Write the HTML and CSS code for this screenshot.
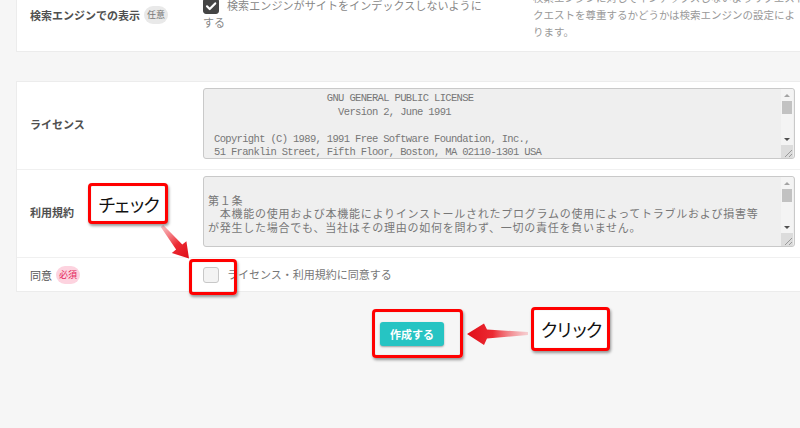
FILE: index.html
```html
<!DOCTYPE html>
<html lang="ja">

<head>
    <meta charset="UTF-8">
    <title>サイト作成</title>
    <link rel="stylesheet" href="styles.css">
</head>

<body>
    <div class="page">

        <!-- SEO row -->
        <div class="card card-top">
            <div class="row row-seo">
                <div class="label">検索エンジンでの表示<span class="badge">任意</span></div>
                <div class="seo-value">
                    <span class="check check-on"><svg width="16" height="16" viewBox="0 0 16 16"><path d="M4 8.3l2.7 2.7L12.2 5.4" fill="none" stroke="#fff" stroke-width="2.2" stroke-linecap="round" stroke-linejoin="round"/></svg></span>検索エンジンがサイトをインデックスしないように<br>する
                </div>
                <div class="help">検索エンジンに対してインデックスしないようリクエストしますが、このリ<br>クエストを尊重するかどうかは検索エンジンの設定によ<br>ります。</div>
            </div>
        </div>

        <!-- License / terms -->
        <div class="card card-main">
            <div class="row row-text">
                <div class="label">ライセンス</div>
                <div class="value">
                    <div class="textbox">
                        <div class="textbox-text mono">                    GNU GENERAL PUBLIC LICENSE
                      Version 2, June 1991

Copyright (C) 1989, 1991 Free Software Foundation, Inc.,
51 Franklin Street, Fifth Floor, Boston, MA 02110-1301 USA</div>
                        <div class="scrollbar">
                            <div class="sb-btn"><span class="arrow-up"></span></div>
                            <div class="sb-thumb"></div>
                            <div class="sb-track"></div>
                            <div class="sb-btn"><span class="arrow-down"></span></div>
                            <div class="sb-grip"><svg width="12" height="13" viewBox="0 0 12 13"><path d="M11 5L4 12M11 9L8 12" stroke="#9a9a9a" stroke-width="1"/></svg></div>
                        </div>
                    </div>
                </div>
            </div>
            <div class="row row-text">
                <div class="label">利用規約</div>
                <div class="value">
                    <div class="textbox">
                        <div class="textbox-text jp">
第１条
　本機能の使用および本機能によりインストールされたプログラムの使用によってトラブルおよび損害等
が発生した場合でも、当社はその理由の如何を問わず、一切の責任を負いません。</div>
                        <div class="scrollbar">
                            <div class="sb-btn"><span class="arrow-up"></span></div>
                            <div class="sb-thumb"></div>
                            <div class="sb-track"></div>
                            <div class="sb-btn"><span class="arrow-down"></span></div>
                            <div class="sb-grip"><svg width="12" height="13" viewBox="0 0 12 13"><path d="M11 5L4 12M11 9L8 12" stroke="#9a9a9a" stroke-width="1"/></svg></div>
                        </div>
                    </div>
                </div>
            </div>
            <div class="row row-agree">
                <div class="label label-light">同意<span class="badge badge-req">必須</span></div>
                <div class="agree">
                    <span class="check"></span>ライセンス・利用規約に同意する
                </div>
            </div>
        </div>

        <div class="actions">
            <button class="btn-submit">作成する</button>
        </div>

        <!-- annotations -->
        <svg class="arrows" width="800" height="428" viewBox="0 0 800 428">
            <defs>
                <linearGradient id="g1" gradientUnits="userSpaceOnUse" x1="160" y1="224" x2="188" y2="258">
                    <stop offset="0" stop-color="#f6a3a8" stop-opacity="0.6"/>
                    <stop offset="0.6" stop-color="#ec2a33"/>
                    <stop offset="1" stop-color="#e0101a"/>
                </linearGradient>
                <linearGradient id="g2" gradientUnits="userSpaceOnUse" x1="530" y1="0" x2="468" y2="0">
                    <stop offset="0" stop-color="#f6a3a8" stop-opacity="0.4"/>
                    <stop offset="0.6" stop-color="#ec2a33"/>
                    <stop offset="1" stop-color="#e0101a"/>
                </linearGradient>
            </defs>
            <polygon points="163.2,225.1 182.3,244.6 186.4,241.2 189,258.5 171.8,253 176.1,249.6 160.8,226.9" fill="url(#g1)"/>
            <polygon points="528,332 487,329.5 484,323.5 467,334 484,345 487,338.5 528,335" fill="url(#g2)"/>
        </svg>

        <div class="mark mark-check"><span>チェック</span></div>
        <div class="mark mark-box"></div>
        <div class="mark mark-btn"></div>
        <div class="mark mark-click"><span>クリック</span></div>
    </div>
</body>

</html>
```

FILE: styles.css
```css
body {
    margin: 0;
    background: #f6f6f6;
    font-family: "Noto Sans CJK JP", sans-serif;
    color: #555;
    overflow: hidden;
}

.page {
    position: relative;
    display: flow-root;
    height: 428px;
    padding-left: 16px;
}

.card {
    background: #fff;
    border: 1px solid #ececec;
    border-right: 0;
}

.card-top {
    margin-top: -24px;
}

.card-main {
    margin-top: 29px;
}

.row {
    display: grid;
    grid-template-columns: 186px 1fr;
    align-items: center;
    border-top: 1px solid #f0f0f0;
}

.row:first-child {
    border-top: 0;
}

.row-seo {
    grid-template-columns: 186px 330px 1fr;
    align-items: start;
    padding: 12px 0 11px;
}

.row-seo .label {
    align-self: center;
}

.label {
    display: flex;
    align-items: center;
    gap: 4px;
    padding-left: 13px;
    font-size: 11px;
    font-weight: 700;
    color: #505050;
}

.label-light {
    font-weight: 400;
    color: #555;
}

.badge {
    display: inline-block;
    padding: 0 3px;
    height: 18px;
    line-height: 18px;
    border-radius: 9px;
    background: #e9e9e9;
    color: #777;
    font-size: 9px;
    font-weight: 400;
}

.badge-req {
    background: #fdd3df;
    color: #e3245a;
}

.seo-value {
    padding-top: 8px;
    font-size: 11px;
    line-height: 17px;
    color: #888;
    letter-spacing: 0.1px;
}

.help {
    font-size: 10.5px;
    line-height: 17px;
    color: #999;
    white-space: nowrap;
    overflow: hidden;
}

.check {
    display: inline-block;
    width: 16px;
    height: 16px;
    box-sizing: border-box;
    border: 1px solid #c8c8c8;
    border-radius: 3px;
    background: #f3f3f3;
    vertical-align: -4px;
    margin-right: 8px;
}

.check svg {
    display: block;
}

.check-on {
    background: #454545;
    border-color: #454545;
}

.check-on svg {
    margin: -1px;
}

/* textareas */
.row-text {
    padding: 6px 0 10px;
}

.value {
    padding-right: 5px;
}

.textbox {
    display: flex;
    height: 71px;
    box-sizing: border-box;
    border: 1px solid #c9c9c9;
    border-radius: 3px;
    background: #efefef;
    overflow: hidden;
}

.textbox-text {
    flex: 1;
    overflow: hidden;
    padding: 3px 10px;
    white-space: pre;
    color: #777;
    line-height: 13.5px;
}

.mono {
    font-family: "Liberation Mono", monospace;
    font-size: 10.5px;
    letter-spacing: -0.66px;
}

.jp {
    padding-left: 4px;
    font-size: 11px;
    letter-spacing: 0.75px;
}

.scrollbar {
    width: 12px;
    margin-right: 1px;
    display: flex;
    flex-direction: column;
    background: #f4f4f4;
}

.sb-btn {
    height: 12px;
    display: flex;
    align-items: center;
    justify-content: center;
}

.arrow-up {
    border-left: 3px solid transparent;
    border-right: 3px solid transparent;
    border-bottom: 3px solid #a3a3a3;
}

.arrow-down {
    border-left: 3px solid transparent;
    border-right: 3px solid transparent;
    border-top: 3px solid #505050;
}

.sb-thumb {
    height: 13px;
    margin: 0 1px;
    background: #c2c2c2;
}

.sb-track {
    flex: 1;
}

.sb-grip {
    height: 13px;
    background: #dcdcdc;
}

.sb-grip svg {
    display: block;
}

.row-agree {
    height: 33px;
}

.agree {
    font-size: 11px;
    color: #777;
}

/* submit */
.actions {
    margin-top: 28px;
    padding-left: 8px;
    text-align: center;
}

.btn-submit {
    width: 64px;
    height: 24px;
    border: 0;
    border-radius: 3px;
    background: #26c4c3;
    box-shadow: 0 1px 2px rgba(0, 0, 0, 0.35);
    color: #fff;
    font-family: "Noto Sans CJK JP", sans-serif;
    font-size: 11px;
    font-weight: 700;
    cursor: pointer;
}

/* screenshot annotations */
.arrows {
    position: absolute;
    left: 0;
    top: 0;
    pointer-events: none;
}

.mark {
    position: absolute;
    box-sizing: border-box;
    border: 3px solid #f00;
    border-radius: 4px;
    box-shadow: 1px 2px 3px rgba(0, 0, 0, 0.4), inset 0 0 1px rgba(0, 0, 0, 0.3);
    display: flex;
    align-items: center;
    justify-content: center;
    color: #111;
    font-size: 18px;
    font-weight: 400;
    letter-spacing: -3px;
}

.mark-check {
    left: 88px;
    top: 183px;
    width: 80px;
    height: 41px;
    background: #fff;
}

.mark-box {
    left: 189px;
    top: 259px;
    width: 48px;
    height: 36px;
}

.mark-btn {
    left: 372px;
    top: 309px;
    width: 91px;
    height: 49px;
}

.mark-click {
    left: 531px;
    top: 307px;
    width: 79px;
    height: 44px;
    background: #fff;
}
```
